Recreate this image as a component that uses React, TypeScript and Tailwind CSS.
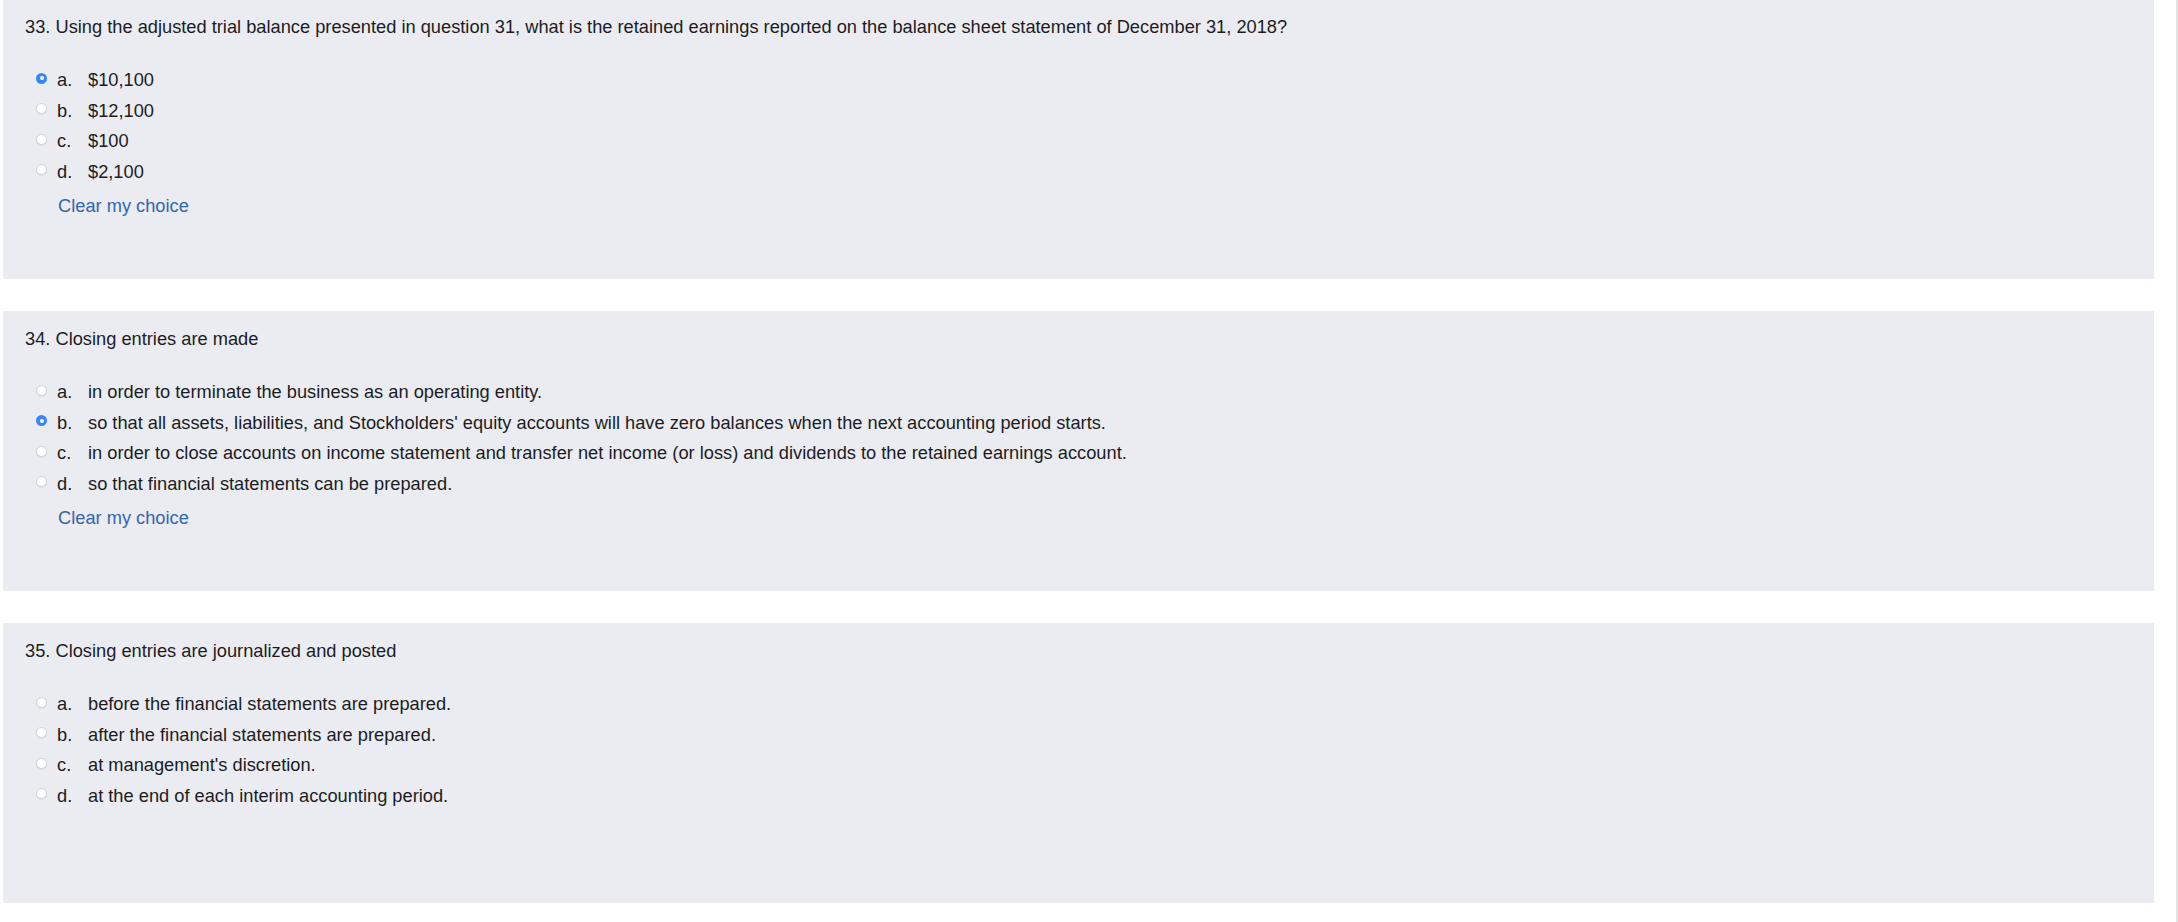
import React, { useState } from 'react';

type Question = {
  num: number;
  text: string;
  options: string[];
  selected: number | null;
};

const initialQuestions: Question[] = [
  {
    num: 33,
    text: 'Using the adjusted trial balance presented in question 31, what is the retained earnings reported on the balance sheet statement of December 31, 2018?',
    options: ['$10,100', '$12,100', '$100', '$2,100'],
    selected: 0,
  },
  {
    num: 34,
    text: 'Closing entries are made',
    options: [
      'in order to terminate the business as an operating entity.',
      "so that all assets, liabilities, and Stockholders' equity accounts will have zero balances when the next accounting period starts.",
      'in order to close accounts on income statement and transfer net income (or loss) and dividends to the retained earnings account.',
      'so that financial statements can be prepared.',
    ],
    selected: 1,
  },
  {
    num: 35,
    text: 'Closing entries are journalized and posted',
    options: [
      'before the financial statements are prepared.',
      'after the financial statements are prepared.',
      "at management's discretion.",
      'at the end of each interim accounting period.',
    ],
    selected: null,
  },
];

const letters = ['a.', 'b.', 'c.', 'd.'];

function Radio({ checked }: { checked: boolean }) {
  if (checked) {
    return (
      <span className="mt-[7.5px] ml-[11px] flex h-[11px] w-[11px] shrink-0 items-center justify-center rounded-full bg-[#3b86f7]">
        <span className="h-[4px] w-[4px] rounded-full bg-white" />
      </span>
    );
  }
  return (
    <span className="mt-[7.5px] ml-[11px] h-[11px] w-[11px] shrink-0 rounded-full border border-[#d3d4d9] bg-white shadow-[0_0.5px_1px_rgba(0,0,0,0.1)]" />
  );
}

function App() {
  const [questions, setQuestions] = useState(initialQuestions);

  const choose = (qi: number, oi: number | null) => {
    setQuestions(prev => prev.map((q, i) => (i === qi ? { ...q, selected: oi } : q)));
  };

  return (
    <div
      className="flex min-h-screen bg-white text-[#1c1c1f]"
      style={{ fontFamily: '"Liberation Sans", Arial, sans-serif' }}
    >
      <div className="-mt-px flex flex-1 flex-col gap-8 pl-[3px] pr-[22px]">
        {questions.map((q, qi) => (
          <div key={q.num} className="h-[280px] bg-[#ebecf1] pl-[22px] pt-[14px]">
            <div className="text-[18.25px] leading-[27px]">
              {q.num}. {q.text}
            </div>

            <div className="mt-[25px]">
              {q.options.map((opt, oi) => (
                <div
                  key={oi}
                  onClick={() => choose(qi, oi)}
                  className="flex h-[30.5px] cursor-pointer items-start text-[18.25px] leading-[30.5px]"
                >
                  <Radio checked={q.selected === oi} />
                  <span className="ml-[10px] w-[31px] shrink-0">{letters[oi]}</span>
                  <span>{opt}</span>
                </div>
              ))}
            </div>

            {/* 35 has nothing picked, so no clear link */}
            {q.selected !== null && (
              <div className="mt-[3.5px] ml-[33px] text-[18.25px] leading-[30.5px]">
                <a
                  href="#"
                  onClick={e => {
                    e.preventDefault();
                    choose(qi, null);
                  }}
                  className="text-[#3466ad]"
                >
                  Clear my choice
                </a>
              </div>
            )}
          </div>
        ))}
      </div>
      <div className="w-[2px] bg-[#e3e3e3]" />
    </div>
  );
}

export default App;
